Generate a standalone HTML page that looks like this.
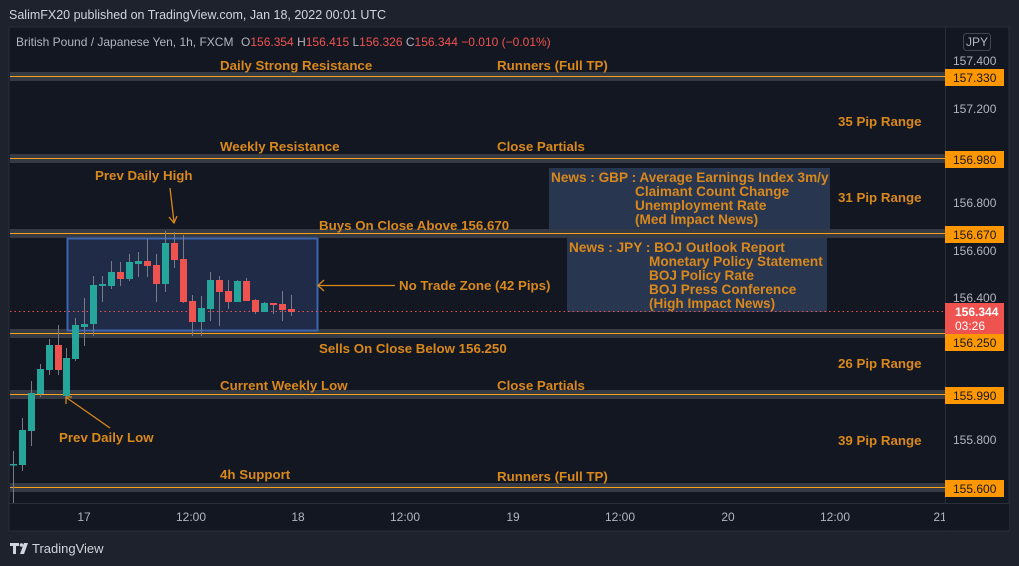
<!DOCTYPE html>
<html><head><meta charset="utf-8"><style>
html,body{margin:0;padding:0;background:#1e222d;width:1019px;height:566px;overflow:hidden}
svg{display:block}
.o{font-family:"Liberation Sans",sans-serif;font-weight:bold;font-size:13.3px;fill:#d9881c}
.ax{font-family:"Liberation Sans",sans-serif;font-size:12px;fill:#b2b5be}
.lb{font-family:"Liberation Sans",sans-serif;font-size:12px;fill:#131722}
</style></head><body>
<svg width="1019" height="566" viewBox="0 0 1019 566" xmlns="http://www.w3.org/2000/svg">
<rect width="1019" height="566" fill="#1e222d"/>
<text x="9" y="19" font-family="Liberation Sans,sans-serif" font-size="12.5" fill="#d1d4dc">SalimFX20 published on TradingView.com, Jan 18, 2022 00:01 UTC</text>
<rect x="9" y="27" width="1000" height="504" fill="#131722" stroke="#2a2e39"/>
<line x1="945.5" y1="27" x2="945.5" y2="531" stroke="#2a2e39"/>
<line x1="9" y1="503.5" x2="1009" y2="503.5" stroke="#2a2e39"/>
<g font-family="Liberation Sans,sans-serif" font-size="12">
<text x="16" y="46" fill="#b2b5be">British Pound / Japanese Yen, 1h, FXCM</text>
<text x="241" y="46" fill="#b2b5be">O<tspan fill="#ef5350">156.354</tspan> H<tspan fill="#ef5350">156.415</tspan> L<tspan fill="#ef5350">156.326</tspan> C<tspan fill="#ef5350">156.344</tspan> <tspan fill="#ef5350">−0.010 (−0.01%)</tspan></text>
</g>
<rect x="963.5" y="33.5" width="27" height="17" rx="3" fill="none" stroke="#434651"/>
<text x="977" y="46" text-anchor="middle" class="ax" font-size="11">JPY</text>
<g>
<rect x="10" y="72" width="935" height="9" fill="#363a45"/><line x1="10" y1="76.5" x2="945" y2="76.5" stroke="#f7a21b"/>
<rect x="10" y="154" width="935" height="9" fill="#363a45"/><line x1="10" y1="158.5" x2="945" y2="158.5" stroke="#f7a21b"/>
<rect x="10" y="229" width="935" height="9" fill="#363a45"/><line x1="10" y1="233.5" x2="945" y2="233.5" stroke="#f7a21b"/>
<rect x="10" y="329" width="935" height="9" fill="#363a45"/><line x1="10" y1="333.5" x2="945" y2="333.5" stroke="#f7a21b"/>
<rect x="10" y="390" width="935" height="9" fill="#363a45"/><line x1="10" y1="394.5" x2="945" y2="394.5" stroke="#f7a21b"/>
<rect x="10" y="483" width="935" height="9" fill="#363a45"/><line x1="10" y1="487.5" x2="945" y2="487.5" stroke="#f7a21b"/>
</g>
<rect x="67.5" y="238.5" width="250" height="92" fill="#1f2b47" stroke="#3b66b0" stroke-width="2"/>
<rect x="549" y="168" width="281" height="61" fill="#283650"/>
<rect x="567" y="238" width="260" height="74" fill="#283650"/>
<line x1="10" y1="311.5" x2="945" y2="311.5" stroke="#ef5350" stroke-dasharray="1.5,3"/>
<g id="c"></g>
<g stroke="#d9881c" fill="none" stroke-width="1.3">
<line x1="170" y1="188" x2="174" y2="222"/><polyline points="169,217 174,223 177,216"/>
<line x1="110" y1="428" x2="67" y2="398"/><polyline points="66,404 66,397 72,397"/>
<line x1="395" y1="285.5" x2="318" y2="285.5"/><polyline points="324,280 318,285.5 324,291"/>
</g>
<g class="o">
<text x="220" y="70">Daily Strong Resistance</text>
<text x="497" y="70">Runners (Full TP)</text>
<text x="838" y="126">35 Pip Range</text>
<text x="220" y="151">Weekly Resistance</text>
<text x="497" y="151">Close Partials</text>
<text x="95" y="180">Prev Daily High</text>
<text x="838" y="202">31 Pip Range</text>
<text x="319" y="230">Buys On Close Above 156.670</text>
<text x="399" y="290">No Trade Zone (42 Pips)</text>
<text x="319" y="353">Sells On Close Below 156.250</text>
<text x="838" y="368">26 Pip Range</text>
<text x="220" y="390">Current Weekly Low</text>
<text x="497" y="390">Close Partials</text>
<text x="59" y="442">Prev Daily Low</text>
<text x="838" y="445">39 Pip Range</text>
<text x="220" y="479">4h Support</text>
<text x="497" y="481">Runners (Full TP)</text>
</g>
<g class="o" font-size="13.6">
<text x="551" y="182" style="font-size:13.6px">News : GBP : Average Earnings Index 3m/y</text>
<text x="635" y="196" style="font-size:13.6px">Claimant Count Change</text>
<text x="635" y="210" style="font-size:13.6px">Unemployment Rate</text>
<text x="635" y="224" style="font-size:13.6px">(Med Impact News)</text>
<text x="569" y="252" style="font-size:13.6px">News : JPY : BOJ Outlook Report</text>
<text x="649" y="266" style="font-size:13.6px">Monetary Policy Statement</text>
<text x="649" y="280" style="font-size:13.6px">BOJ Policy Rate</text>
<text x="649" y="294" style="font-size:13.6px">BOJ Press Conference</text>
<text x="649" y="308" style="font-size:13.6px">(High Impact News)</text>
</g>
<g class="ax">
<text x="953" y="65">157.400</text>
<text x="953" y="113">157.200</text>
<text x="953" y="207">156.800</text>
<text x="953" y="255">156.600</text>
<text x="953" y="302">156.400</text>
<text x="953" y="444">155.800</text>
</g>
<g>
<rect x="945" y="69" width="59" height="17" fill="#ff9800"/><text x="953" y="82" class="lb">157.330</text>
<rect x="945" y="151" width="59" height="17" fill="#ff9800"/><text x="953" y="164" class="lb">156.980</text>
<rect x="945" y="226" width="59" height="17" fill="#ff9800"/><text x="953" y="239" class="lb">156.670</text>
<rect x="945" y="303" width="59" height="31" fill="#ef5350"/>
<text x="955" y="316" font-family="Liberation Sans,sans-serif" font-size="12" font-weight="bold" fill="#fff">156.344</text>
<text x="955" y="330" font-family="Liberation Sans,sans-serif" font-size="12" fill="#fff">03:26</text>
<rect x="945" y="334" width="59" height="17" fill="#ff9800"/><text x="953" y="347" class="lb">156.250</text>
<rect x="945" y="387" width="59" height="17" fill="#ff9800"/><text x="953" y="400" class="lb">155.990</text>
<rect x="945" y="480" width="59" height="17" fill="#ff9800"/><text x="953" y="493" class="lb">155.600</text>
</g>
<g class="ax" text-anchor="middle">
<text x="84" y="521">17</text><text x="191" y="521">12:00</text><text x="298" y="521">18</text><text x="405" y="521">12:00</text>
<text x="513" y="521">19</text><text x="620" y="521">12:00</text><text x="728" y="521">20</text><text x="835" y="521">12:00</text><text x="940" y="521">21</text>
</g>
<rect x="945" y="504" width="64" height="26" fill="#131722"/>
<g fill="#d1d4dc">
<path d="M10 543h9v3h-3v8h-3v-8h-3z"/><circle cx="21.5" cy="545" r="1.8"/><path d="M24 543h4l-4 11h-4z"/>
</g>
<text x="32" y="553" font-family="Liberation Sans,sans-serif" font-size="13" fill="#d1d4dc">TradingView</text>
</svg>
<script>
var d=[[13,464,464,451,503,1],[22,430,465,418,471,1],[31,393,431,381,446,1],[40,369,394,364,397,1],[49,345,370,339,375,1],[58,345,370,325,375,0],[66,358,396,348,399,1],[75,325,359,318,361,1],[84,324,327,298,346,1],[93,285,324,276,336,1],[102,284,286,276,302,1],[111,272,286,261,289,1],[120,272,279,262,286,0],[129,262,279,254,281,1],[138,261,264,252,277,1],[147,261,266,239,277,0],[156,265,284,254,302,0],[165,243,284,231,292,1],[174,243,260,232,268,0],[183,259,302,235,303,0],[192,301,322,295,336,0],[201,308,322,296,336,1],[210,280,309,272,321,1],[219,280,292,276,326,0],[228,291,302,280,309,0],[237,281,302,280,302,1],[246,281,301,278,301,0],[255,300,312,299,314,0],[264,303,312,302,312,1],[273,303,305,303,314,0],[282,304,310,291,321,0],[291,309,312,295,316,0]];
var s='';d.forEach(function(c){var col=c[5]?'#26a69a':'#ef5350';s+='<line x1="'+(c[0]+.5)+'" y1="'+c[3]+'" x2="'+(c[0]+.5)+'" y2="'+c[4]+'" stroke="#787b86"/>';var h=Math.max(1.5,c[2]-c[1]);s+='<rect x="'+(c[0]-3)+'" y="'+c[1]+'" width="7" height="'+h+'" fill="'+col+'"/>';});
document.getElementById('c').innerHTML=s;
</script>
</body></html>
